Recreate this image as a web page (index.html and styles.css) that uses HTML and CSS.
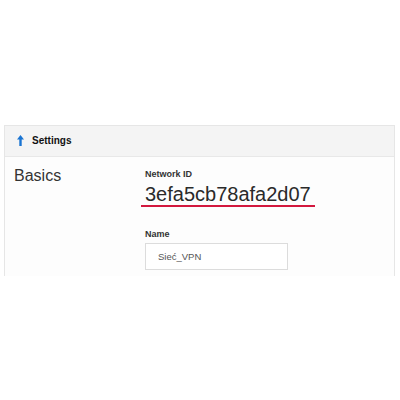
FILE: index.html
```html
<!DOCTYPE html>
<html lang="en">
    <head>
        <meta charset="UTF-8" />
        <meta name="viewport" content="width=device-width, initial-scale=1.0" />
        <title>Network Settings</title>

        <link rel="stylesheet" href="styles.css">
    </head>

    <body>
        <div class="panel">
            <div class="panel-head">
                <svg class="arrow" viewBox="0 0 7 11" width="7" height="11">
                    <path d="M3.5 0L7 4.5H4.7V11H2.3V4.5H0Z" fill="#1a74d2" />
                </svg>
                <span>Settings</span>
            </div>

            <div class="panel-body">
                <div class="section-title">Basics</div>

                <div class="fields">
                    <label class="label">Network ID</label>
                    <div class="network-id"><span class="marked">3efa5cb78afa2d07</span></div>

                    <label class="label name-label">Name</label>
                    <input class="name-input" type="text" value="Sieć_VPN" />
                </div>
            </div>
        </div>
    </body>
</html>
```

FILE: styles.css
```css
* {
    margin: 0;
    padding: 0;
    box-sizing: border-box;
}

body {
    background-color: #fff;
    color: #222;
    font-family: "Liberation Sans", Arial, sans-serif;
    padding: 125px 0 0 4px;
}

.panel {
    width: 391px;
    border: 1px solid #e6e6e6;
    border-bottom: none;
}

.panel-head {
    height: 31px;
    display: flex;
    align-items: center;
    gap: 8px;
    padding: 0 0 2px 12px;
    background-color: #f4f4f4;
    border-bottom: 1px solid #e8e8e8;
    font-size: 10px;
    font-weight: bold;
    color: #111;
}

.arrow {
    display: block;
}

.panel-body {
    display: flex;
    padding: 9px 0 6px 9px;
    background-color: #fdfdfd;
}

.section-title {
    width: 131px;
    font-size: 16px;
    line-height: 20px;
    color: #333;
}

.fields {
    display: flex;
    flex-direction: column;
    align-items: flex-start;
    padding-top: 3px;
}

.label {
    font-size: 9px;
    line-height: 11px;
    font-weight: bold;
    color: #333;
}

.network-id {
    margin-top: 4px;
    font-size: 20px;
    line-height: 21px;
    color: #2a2a2a;
}

.marked {
    display: inline-block;
    margin-left: -4px;
    padding: 0 4px;
    border-bottom: 2px solid #d3183e;
}

.name-label {
    margin-top: 22px;
}

.name-input {
    margin-top: 3px;
    width: 143px;
    height: 27px;
    padding-left: 12px;
    border: 1px solid #dcdcdc;
    background-color: #fff;
    font-family: "Liberation Sans", Arial, sans-serif;
    font-size: 9.5px;
    color: #555;
}
```
